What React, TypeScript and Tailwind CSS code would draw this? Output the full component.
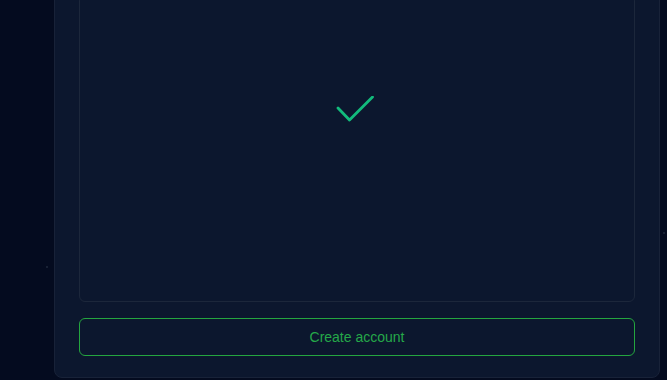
import React from 'react';

const CheckMark = () => (
  <svg width="40" height="30" viewBox="0 0 40 30" fill="none" className="text-[#12bb7c]">
    <polyline points="2,12 13.5,24 36.5,1" stroke="currentColor" strokeWidth="2.8" strokeLinecap="round" strokeLinejoin="round" />
  </svg>
);

export default function App() {
  return (
    <div className="flex h-[380px] w-[667px] overflow-hidden bg-[#040b1f] font-['Liberation_Sans',Arial,sans-serif]">
      {/* left gutter */}
      <div className="relative w-[54px] shrink-0">
        <div className="absolute left-[46px] top-[266px] h-[2px] w-[2px] rounded-full bg-[#1f2a3d]" />
      </div>

      <div className="-mt-[30px] flex h-[408px] w-[606px] shrink-0 flex-col gap-[16px] rounded-lg border border-[#182238] bg-[#0c172e] px-[24px] pb-[21px] pt-[24px]">
        <div className="flex flex-1 flex-col items-center rounded-md border border-[#1c273b] pt-[100px]">
          <div className="ml-[-2px]">
            <CheckMark />
          </div>
        </div>
        <button
          type="button"
          className="h-[38px] w-full rounded-md border border-[#24a53f] text-[14px] text-[#25a849]"
        >
          Create account
        </button>
      </div>

      <div className="relative flex-1">
        <div className="absolute left-[3px] top-[232px] h-[2px] w-[2px] rounded-full bg-[#1f2a3d]" />
      </div>
    </div>
  );
}
